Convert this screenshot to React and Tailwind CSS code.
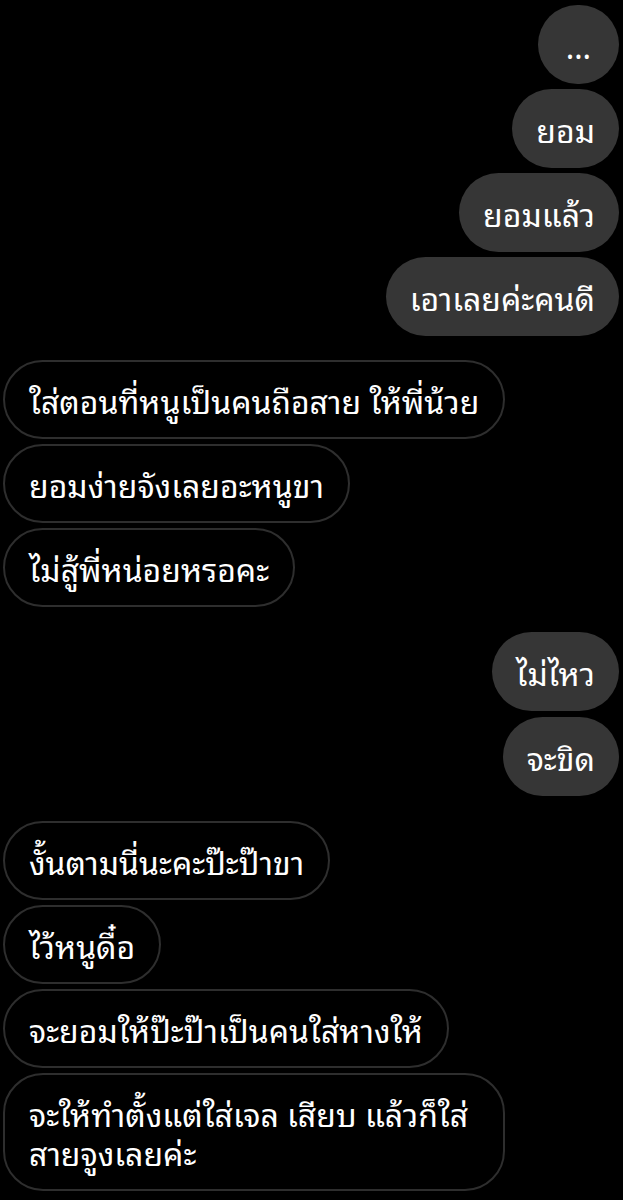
import React from "react";

const font = { fontFamily: '"Noto Sans Thai Looped", "Noto Sans Thai", "Noto Sans", "DejaVu Sans", sans-serif' };

function Right({ children }) {
  return (
    <div className="flex justify-end">
      <div className="bg-[#363636] text-white rounded-full px-6 py-[20px] text-[32px] leading-[39px] whitespace-nowrap">
        {children}
      </div>
    </div>
  );
}

function Left({ children, multi }) {
  return (
    <div className="flex justify-start">
      <div
        className={
          "border-2 border-[#2e2e2e] text-white px-6 py-[18px] text-[32px] leading-[39px] whitespace-nowrap " +
          (multi ? "rounded-[40px] w-[502px]" : "rounded-full")
        }
      >
        {children}
      </div>
    </div>
  );
}

export default function App() {
  return (
    <div className="bg-black min-h-[1200px] w-[623px] pt-[5px] pl-[3px] pr-[4px]" style={font}>
      <div className="flex flex-col gap-[5px]">
        <Right>
          <span className="inline-block px-[4px]">…</span>
        </Right>
        <Right>ยอม</Right>
        <Right>ยอมแล้ว</Right>
        <Right>เอาเลยค่ะคนดี</Right>
      </div>
      <div className="flex flex-col gap-[5px] mt-[24px]">
        <Left>ใส่ตอนที่หนูเป็นคนถือสาย ให้พี่น้วย</Left>
        <Left>ยอมง่ายจังเลยอะหนูขา</Left>
        <Left>ไม่สู้พี่หน่อยหรอคะ</Left>
      </div>
      <div className="flex flex-col gap-[6px] mt-[25px]">
        <Right>ไม่ไหว</Right>
        <Right>จะขิด</Right>
      </div>
      <div className="flex flex-col gap-[5px] mt-[25px]">
        <Left>งั้นตามนี่นะคะป๊ะป๊าขา</Left>
        <Left>ไว้หนูดื๋อ</Left>
        <Left>จะยอมให้ป๊ะป๊าเป็นคนใส่หางให้</Left>
        <Left multi>
          จะให้ทำตั้งแต่ใส่เจล เสียบ แล้วก็ใส่
          <br />
          สายจูงเลยค่ะ
        </Left>
      </div>
    </div>
  );
}
